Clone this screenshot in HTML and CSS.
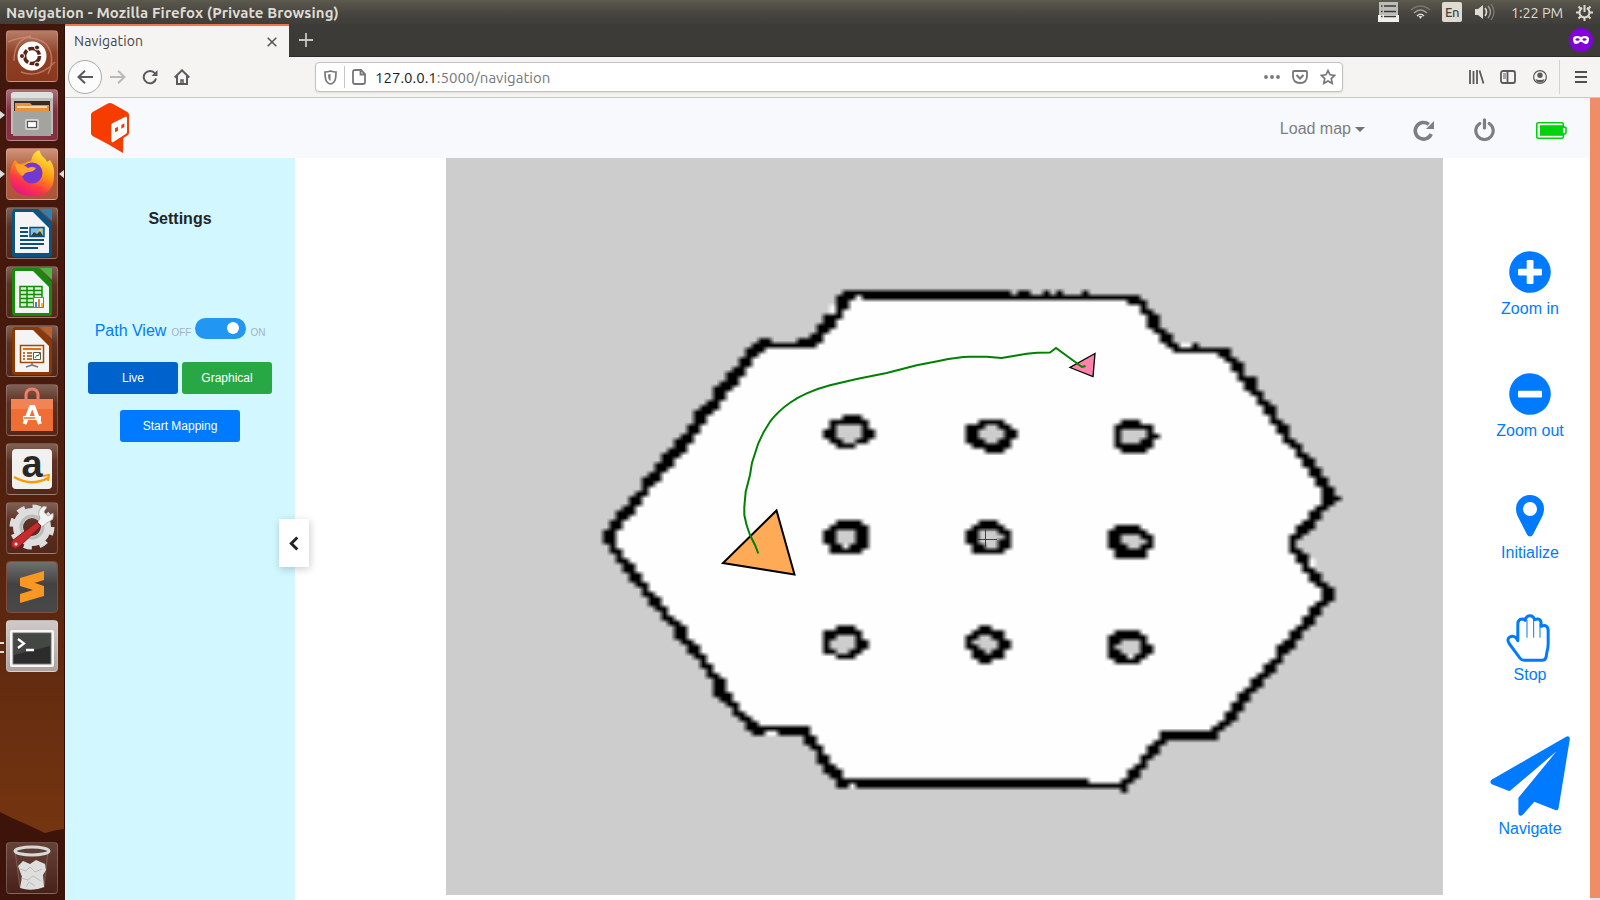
FILE: index.html
```html
<!DOCTYPE html>
<html lang="en">
<head>
<meta charset="utf-8">
<title>Navigation</title>
<link rel="stylesheet" href="styles.css">
</head>
<body>
<div class="desktop">
  <header class="panel">
    <span class="panel-title">Navigation - Mozilla Firefox (Private Browsing)</span>
    <div class="tray">
      <svg class="t-list" width="21" height="20" viewBox="0 0 21 20"><path d="M1 0h19v14H1z" fill="#bdbdb8"/><path d="M0 13h21v7H0z" fill="#efefec"/><path d="M3 4h1.500M6 4h12M3 9.500h1.500M6 9.500h12M3 14.500h1.500M6 14.500h12" stroke="#383733" stroke-width="1.300"/></svg>
      <svg class="t-wifi" width="21" height="14" viewBox="0 0 21 14" fill="none" stroke-width="1.600"><path d="M1 5Q10.500-3 20 5" stroke="#777670"/><path d="M4 8Q10.500 2 17 8" stroke="#a09e96"/><path d="M7 11Q10.500 7.500 14 11" stroke="#dfdbd2"/><path d="M8.500 11l2 3 2-3z" fill="#dfdbd2"/></svg>
      <span class="lang">En</span>
      <svg class="t-vol" width="20" height="16" viewBox="0 0 20 16" fill="none"><path d="M0 5h3l5-4v14l-5-4H0z" fill="#dfdbd2"/><path d="M10 4q3 4 0 8" stroke="#dfdbd2" stroke-width="1.600"/><path d="M13 2q5 6 0 12" stroke="#a09e96" stroke-width="1.400"/><path d="M16 0q6 8 0 16" stroke="#777670" stroke-width="1.400"/></svg>
      <span class="clock">1:22 PM</span>
      <svg width="17" height="17" viewBox="0 0 17 17" fill="none" stroke="#dfdbd2"><path d="M6.200 4a5 5 0 1 0 4.600 0" stroke-width="2"/><path d="M8.500 1v7" stroke-width="2"/><path d="M2.500 2.500l2 2M14.500 2.500l-2 2M0 8.500h3M14 8.500h3M2.500 14.500l2-2M14.500 14.500l-2-2M8.500 14v3" stroke-width="2"/></svg>
    </div>
  </header>
  <div class="work">
    <nav class="launcher">
      <svg class="dunes" width="65" height="100" viewBox="0 0 65 100"><path d="M0 12l12 6 18 8 15 7 12-3 8-1v71H0z" fill="#3e1309"/></svg>
      <div class="tile dash"><svg viewBox="0 0 52 52"><g fill="none" stroke="#d99a83" stroke-width="1.500" opacity=".6"><path d="M2 12Q24 2 40 14q10 12 2 30"/><path d="M8 31Q8 10 25 6"/><path d="M15 42q18 7 34-10"/></g><circle cx="26" cy="26" r="14.500" fill="#fff"/><circle cx="26" cy="26" r="7.500" fill="none" stroke="#572616" stroke-width="3.500" stroke-dasharray="14 1.700"/><g fill="#572616" stroke="#fff"><circle cx="16" cy="26" r="2.500"/><circle cx="31" cy="17.500" r="2.500"/><circle cx="31" cy="34.500" r="2.500"/></g></svg></div>
      <div class="tile files running"><svg viewBox="0 0 52 52"><path d="M5 5q1-2 3-2h36q2 0 3 2v40H5z" fill="#bcbcb9"/><path d="M5 5q1-2 3-2h36q2 0 3 2v4H5z" fill="#dededb"/><path d="M8 12h36v12H8z" fill="#3b2924"/><path d="M9 14h15l2 2h17v9H9z" fill="#e9913c"/><path d="M11 18h30" stroke="#fff0c8" stroke-width="1.500"/><path d="M7 22h38v25H7z" fill="#a3a3a0"/><rect x="19" y="30" width="14" height="11" rx="2" fill="#d4d4d1"/><rect x="21.500" y="32.500" width="9" height="6" fill="#fff" stroke="#555" stroke-width="1.200"/></svg></div>
      <div class="tile fox running active"><svg viewBox="0 0 52 52"><defs><linearGradient id="ff" x1=".8" y1="0" x2=".3" y2="1"><stop offset="0" stop-color="#fff44f"/><stop offset=".45" stop-color="#ff980e"/><stop offset=".75" stop-color="#ff3647"/><stop offset="1" stop-color="#e31587"/></linearGradient></defs><path d="M9 12q2 2 4 4l6-1q3-2 6-2 1-8 8-11l3 6q3 2 5 6l3-2q5 7 4 16 0 20-22 20T4 28q0-10 5-16z" fill="url(#ff)"/><circle cx="26" cy="25" r="10.500" fill="#7139cf"/><path d="M9 16q9 0 13 4 4-2 8 0-2 4-8 4-4 1-5 4-6-2-8-12z" fill="#ffa52b"/></svg></div>
      <div class="tile"><svg viewBox="0 0 52 52"><path d="M8 2h24l14 14v31q0 3-3 3H9q-3 0-3-3V5z" fill="#0a5485"/><path d="M9 5h18l16 16v25H9z" fill="#f4f4f4"/><path d="M34 2h12v12z" fill="#2c82b5"/><path d="M14 21h8M14 25h8M14 29h8M14 33h24M14 37h24M14 41h18" stroke="#0b4f7d" stroke-width="2"/><path d="M24 20.500h14v9H24z" fill="#7fc1e6" stroke="#0b4f7d" stroke-width="1.500"/><path d="M25 29l3-4 3 2 3-3 3 5z" fill="#39412a"/><circle cx="34.500" cy="23" r="1.500" fill="#ffc425"/></svg></div>
      <div class="tile"><svg viewBox="0 0 52 52"><path d="M8 2h24l14 14v31q0 3-3 3H9q-3 0-3-3V5z" fill="#168a0b"/><path d="M9 5h18l16 16v26H9z" fill="#f4f4f4"/><path d="M34 2h12v12z" fill="#4cb83f"/><path d="M14 20h22v21H14z" fill="#d8f2d2"/><path d="M14 20.500h22v20.500H14zM14 24.500h22M14 28.500h22M14 32.500h22M14 36.500h22M21 20v21M28 20v21" fill="none" stroke="#168a0b" stroke-width="1.500"/><path d="M27.500 31.500h10v10h-10z" fill="#fff" stroke="#777"/><path d="M29 36h2v5h-2z" fill="#1b8ee0"/><path d="M32 33h2v8h-2z" fill="#f07a1d"/><path d="M35 37h2v4h-2z" fill="#f5b921"/></svg></div>
      <div class="tile"><svg viewBox="0 0 52 52"><path d="M8 2h24l14 14v31q0 3-3 3H9q-3 0-3-3V5z" fill="#8d3703"/><path d="M9 5h18l16 16v26H9z" fill="#f4f4f4"/><path d="M34 2h12v12z" fill="#bb622b"/><path d="M14.500 20.500h23v17h-23z" fill="#fff8ef" stroke="#a1470b" stroke-width="1.500"/><path d="M17 24h18" stroke="#e06f22" stroke-width="2"/><path d="M17 28h2M21 28h5M17 31h2M21 31h5M17 34h2M21 34h5" stroke="#a1470b" stroke-width="1.600"/><path d="M27.500 27.500h7v7h-7z" fill="#fff" stroke="#555"/><path d="M29 33l2-3 1 1 2-3" fill="none" stroke="#168a0b"/><path d="M26 38v2l-6 2M26 40l6 2" fill="none" stroke="#777" stroke-width="1.500"/></svg></div>
      <div class="tile"><svg viewBox="0 0 52 52"><path d="M5 15h42v32H5z" fill="#ef6e34"/><path d="M5 15h42v10H5z" fill="#f18452"/><path d="M20 18V10q1-5 6-5t6 5v8" fill="none" stroke="#f0806a" stroke-width="3"/><path d="M18.500 40l6.500-17h2.500l6.500 17" fill="none" stroke="#fff" stroke-width="4"/><path d="M17 34h18" stroke="#fff" stroke-width="4"/><path d="M18 34h11" stroke="#ef6e34" stroke-width="1.500"/></svg></div>
      <div class="tile"><svg viewBox="0 0 52 52"><rect x="6" y="6" width="40" height="40" rx="4" fill="#f1f1f0"/><text x="26" y="33.500" class="amz">a</text><path d="M8 34q17 10 34 1" fill="none" stroke="#f90" stroke-width="2.500"/><path d="M37 33l6-1-1 6" fill="none" stroke="#f90" stroke-width="2"/></svg></div>
      <div class="tile"><svg viewBox="0 0 52 52"><circle cx="26" cy="25" r="14" fill="none" stroke="#dedede" stroke-width="10"/><circle cx="26" cy="25" r="20" fill="none" stroke="#dedede" stroke-width="5" stroke-dasharray="8 7.700"/><circle cx="26" cy="25" r="11" fill="none" stroke="#bbb" stroke-width="3"/><path d="M31 22l3-6q-4-8 4-12l3 1-3 5 4 4 5-3q2 7-5 9l-6 5z" fill="#f2f2f2" stroke="#999" stroke-width=".7"/><path d="M31 20l4 4-22 21q-4 3-7 0-2-3 0-6z" fill="#c72b2d" stroke="#80151a"/><circle cx="10" cy="42" r="1.500" fill="#fff"/></svg></div>
      <div class="tile sublime"><svg viewBox="0 0 52 52"><path d="M14 17l24-7v9l-13 4 13 4v8l-24 7v-9l13-4-13-4z" fill="#f89822"/><path d="M14 17l24 8v3l-24-4z" fill="#f89822"/></svg></div>
      <div class="tile term running"><svg viewBox="0 0 52 52"><rect x="4" y="10" width="44" height="37" rx="2" fill="#f6f6f6"/><rect x="7" y="13" width="38" height="31" fill="#2b2c2b" stroke="#777"/><path d="M8 14h36v12L8 35z" fill="#454745"/><path d="M12 19l6 4.500-6 4.500M20 30h8" stroke="#fff" stroke-width="2.300" fill="none"/></svg></div>
      <div class="tile trash"><svg viewBox="0 0 52 52"><path d="M9 9h33l-4 36q-12 4-24 0z" fill="#5c3a30" stroke="#8a6f66" stroke-width=".7"/><path d="M12 24l5-5 7 3 6-4 9 4 1 6-3 5 1 12q-12 5-24 1l2-11z" fill="#dededc"/><path d="M14 27l6 2 4-4 5 5 7-3M15 36l7 2 5-4 8 5M20 45l3-5 6 4" stroke="#bcbcb9" fill="none"/><ellipse cx="26" cy="9" rx="17" ry="4" fill="#5a4038" stroke="#d8d8d6" stroke-width="3"/></svg></div>
    </nav>
    <main class="browser">
      <div class="tabs">
        <div class="tab"><span>Navigation</span><svg width="10" height="10" viewBox="0 0 10 10"><path d="M.7.700l8.600 8.600M9.300.7L.7 9.300" stroke="#56565a" stroke-width="1.600"/></svg></div>
        <svg class="newtab" width="14" height="14" viewBox="0 0 14 14"><path d="M7 0v14M0 7h14" stroke="#c8c6c0" stroke-width="1.800"/></svg>
        <svg class="mask" width="24" height="24" viewBox="0 0 24 24"><circle cx="12" cy="12" r="12" fill="#8000d7"/><path d="M4 10q1-2 4-2 2 0 4 1 2-1 4-1 3 0 4 2 0 6-3 6-2 0-4-2h-2q-2 2-4 2-3 0-3-6z" fill="#fff"/><ellipse cx="8.500" cy="11.500" rx="2" ry="1.200" fill="#8000d7"/><ellipse cx="15.500" cy="11.500" rx="2" ry="1.200" fill="#8000d7"/></svg>
      </div>
      <div class="toolbar">
        <span class="back"><svg width="16" height="14" viewBox="0 0 16 14" fill="none" stroke="#5a5a5c" stroke-width="2"><path d="M8 .7L1.500 7 8 13.300M1.500 7H16"/></svg></span>
        <svg class="fwd" width="16" height="14" viewBox="0 0 16 14" fill="none" stroke="#bbb9b6" stroke-width="2"><path d="M8 .7L14.500 7 8 13.300M14.500 7H0"/></svg>
        <svg class="reload" width="16" height="16" viewBox="0 0 16 16"><path d="M13 4.500A6.200 6.200 0 1 0 14 9.500" fill="none" stroke="#5a5a5c" stroke-width="2"/><path d="M15.500 1v6h-6z" fill="#5a5a5c"/></svg>
        <svg class="home" width="16" height="16" viewBox="0 0 16 16" fill="none" stroke="#5a5a5c" stroke-width="2"><path d="M.7 8.500L8 1.300l7.300 7.200M3 7v8h10V7"/><path d="M7 15v-4h2v4" stroke-width="1.500"/></svg>
        <div class="url">
          <svg width="13" height="15" viewBox="0 0 13 15"><path d="M6.500 1q2.500 1 5.500 1 0 8-2 10-2 2-3.500 2T3 12Q1 10 1 2q3 0 5.500-1z" fill="none" stroke="#77777a" stroke-width="1.700"/><path d="M6.500 4v7Q4 10 4 4.500z" fill="#77777a"/></svg>
          <i class="sep"></i>
          <svg width="14" height="16" viewBox="0 0 14 16" fill="none" stroke="#77777a" stroke-width="1.800"><path d="M3 1h6l4 4v8q0 2-2 2H3q-2 0-2-2V3q0-2 2-2zM8.500 1.500v4H13"/></svg>
          <span class="addr">127.0.0.1<em>:5000/navigation</em></span>
          <svg class="dots" width="16" height="4" viewBox="0 0 16 4" fill="#77777a"><circle cx="2" cy="2" r="1.900"/><circle cx="8" cy="2" r="1.900"/><circle cx="14" cy="2" r="1.900"/></svg>
          <svg class="pocket" width="16" height="14" viewBox="0 0 16 14" fill="none" stroke="#77777a" stroke-width="1.800"><path d="M1 2q0-1 1-1h12q1 0 1 1v4q0 7-7 7T1 6z"/><path d="M4.500 5L8 8.500 11.500 5" stroke-width="2"/></svg>
          <svg class="star" width="16" height="16" viewBox="0 0 16 16" fill="none" stroke="#77777a" stroke-width="1.700"><path d="M8 1.500l2 4.300 4.700.6-3.400 3.200.9 4.700L8 12l-4.200 2.300.9-4.700L1.300 6.400 6 5.800z"/></svg>
        </div>
        <svg class="lib" width="16" height="14" viewBox="0 0 16 14" stroke="#5a5a5c" stroke-width="1.800"><path d="M1 0v14M4.500 1v13M8 0v14M10.500.5l4 13"/></svg>
        <svg class="side" width="16" height="14" viewBox="0 0 16 14" fill="none" stroke="#5a5a5c" stroke-width="1.800"><rect x="1" y="1" width="14" height="12" rx="2"/><path d="M7.500 1v12"/><path d="M3 4h3M3 6h3M3 8h3" stroke-width="1"/></svg>
        <svg class="user" width="14" height="14" viewBox="0 0 14 14"><circle cx="7" cy="7" r="6.400" fill="none" stroke="#5a5a5c" stroke-width="1.200"/><circle cx="7" cy="5.300" r="2.700" fill="#5a5a5c"/><path d="M2.500 9q1.500 1 4.500 1t4.500-1q-1 3.500-4.500 3.500T2.500 9z" fill="#5a5a5c"/></svg>
        <i class="tbsep"></i>
        <svg width="12" height="12" viewBox="0 0 12 12" stroke="#4f4f51" stroke-width="1.800"><path d="M0 1h12M0 6h12M0 11h12"/></svg>
      </div>
      <div class="page">
        <div class="site">
          <div class="navbar">
            <svg class="logo" width="38" height="50" viewBox="0 0 114 150"><path d="M57 0q4 0 8 2l44 25q5 3 5 8v54q0 5-4 8l-13 8 -1 45q-46-28-90-50-6-3-6-9V35q0-5 5-8L49 2q4-2 8-2z" fill="#f73c00"/><path d="M64 61l38-19q6-3 6 3v42q0 4-4 6L67 117q-6 3-6-3V67q0-4 3-6z" fill="#fff"/><path d="M72 76l9-5v12l-9 5zM91 66l9-5v11l-9 5z" fill="#f73c00"/></svg>
            <div class="nav-right">
              <span class="load">Load map<i class="caret"></i></span>
              <svg class="refresh" width="21" height="21" viewBox="0 0 21 21"><path d="M18.200 14A8.300 8.300 0 1 1 15.800 4.300" fill="none" stroke="#7c7e80" stroke-width="3.600"/><path d="M21 1v8h-8z" fill="#7c7e80"/></svg>
              <svg class="power" width="21" height="23" viewBox="0 0 21 23" fill="none" stroke="#7c7e80" stroke-width="3.200" stroke-linecap="round"><path d="M5.800 5.500a8.700 8.700 0 1 0 9.400 0M10.500 1.800V10"/></svg>
              <svg width="31" height="17" viewBox="0 0 31 17"><path d="M2 .8h24q1.300 0 1.300 1.300v3h1.400q1.300 0 1.300 1.300v4.200q0 1.300-1.300 1.300h-1.400v3q0 1.300-1.300 1.300H2q-1.200 0-1.200-1.300V2.100Q.8.800 2 .8z" fill="#fff" stroke="#00d20c" stroke-width="1.600"/><path d="M4 3.200h23v10.600H4z" fill="#00d20c"/></svg>
            </div>
          </div>
          <div class="content">
            <aside class="sidebar">
              <h1>Settings</h1>
              <div class="pathview"><span>Path View</span><small>OFF</small><i class="switch"></i><small>ON</small></div>
              <div class="row"><button class="live">Live</button><button class="graph">Graphical</button></div>
              <button class="start">Start Mapping</button>
              <button class="collapse" aria-label="Collapse"><svg width="10" height="15" viewBox="0 0 10 15"><path d="M8.300 1.500L2.300 7.500l6 6" fill="none" stroke="#212529" stroke-width="3"/></svg></button>
            </aside>
            <section class="map">
              <canvas id="map" width="997" height="737"></canvas>
              <svg class="overlay" width="997" height="737" viewBox="446 158 997 737">
                <path d="M978 539.500h19M985.500 530v17" stroke="#222" stroke-width=".8"/>
                <path d="M776.500 510.500L723 563l71.500 11.500z" fill="#ffaa56" stroke="#000" stroke-width="2"/>
                <path d="M1095 353.500l-25 14 23 9z" fill="#ff82ac" stroke="#000" stroke-width="1.300"/>
                <path d="M758.300 553.500L755 545 750 535Q746 525 744.300 515V507L745.700 491.700 750 475 752 462.700 758.300 443.300Q763 432 770 421.700 778 411 790 402.700 798 397 806.700 393.300 818 388.500 830 385.300L856.700 379 886.700 373 916.700 365.300 940 360.700Q957 357 970 356.700H986.700L1001.700 358 1026.700 353.700Q1036 352.500 1050 352.500L1056 348 1082 367 1085.500 366" fill="none" stroke="#008000" stroke-width="2"/>
              </svg>
            </section>
            <div class="actions">
              <div class="act"><svg width="42" height="42" viewBox="0 0 42 42"><circle cx="21" cy="21" r="20.800" fill="#007bff"/><rect x="9" y="17.700" width="24" height="6.800" rx="1.300" fill="#fff"/><rect x="17.700" y="9" width="6.800" height="24" rx="1.300" fill="#fff"/></svg><span>Zoom in</span></div>
              <div class="act"><svg width="42" height="42" viewBox="0 0 42 42"><circle cx="21" cy="21" r="20.800" fill="#007bff"/><rect x="9" y="17.700" width="24" height="6.800" rx="1.300" fill="#fff"/></svg><span>Zoom out</span></div>
              <div class="act"><svg width="28" height="42" viewBox="0 0 28 42"><path fill-rule="evenodd" d="M14 0a14 14 0 0 1 14 14q0 3.500-1.300 6.500L17 39.500q-1 2-3 2t-3-2L1.300 20.500Q0 17.500 0 14A14 14 0 0 1 14 0zm0 7a7 7 0 1 0 0 14 7 7 0 0 0 0-14z" fill="#007bff"/></svg><span>Initialize</span></div>
              <div class="act up"><svg class="hand" width="44" height="48" viewBox="0 0 131 144" fill="none" stroke="#007bff"><path d="M35 80V31q0-15 13-16 6 0 9 4 3-14 14-14t14 12q20-8 20 13v7q21-8 21 14v38q0 12-4 27l-2 12q-2 11-12 11H54q-8 0-13-7L10 90Q0 76 11 69q10-6 19 3z" stroke-width="9" stroke-linejoin="round"/><path d="M62.500 18v53M82.500 18v53M101.500 28v43" stroke-width="3"/></svg><span>Stop</span></div>
              <div class="act up nav"><svg width="80" height="80" viewBox="0 0 240 241"><path d="M229 2q6-3 10 2 1 2 1 5l-34 209q-2 8-10 5l-63-25-33 38q-4 5-10 4-5-2-5-8v-46L200 46 60 165q-2 2-5 0L5 145q-8-6-1-13z" fill="#007bff"/></svg><span>Navigate</span></div>
            </div>
          </div>
        </div>
        <div class="strip"></div>
      </div>
    </main>
  </div>
</div>
<script src="map.js"></script>
</body>
</html>
```

FILE: styles.css
```css
* { box-sizing: border-box; }
body { margin: 0; background: #fff; overflow: hidden; font-family: "Liberation Sans", Arial, sans-serif; }
svg { display: block; flex: none; }
.desktop { width: 1600px; height: 900px; display: flex; flex-direction: column; }
.panel { height: 24px; flex: none; display: flex; align-items: center; justify-content: space-between; padding: 0 7px 0 6px; background: linear-gradient(#5c594d, #45443f 60%, #3f3e3a); color: #dfdbd2; font-family: Ubuntu, "Noto Sans", sans-serif; }
.panel-title { font-size: 15px; font-weight: 700; letter-spacing: 0.12px; white-space: nowrap; }
.tray { display: flex; align-items: center; }
.t-list { margin-right: 11px; }
.t-wifi { margin-right: 11px; }
.lang { width: 20px; height: 20px; border-radius: 2px; background: #dfdbd2; color: #45443f; font-size: 13px; line-height: 20px; text-align: center; margin-right: 13px; letter-spacing: -0.5px; font-weight: 500; }
.t-vol { margin-right: 16px; }
.clock { width: 52px; font-size: 14.500px; margin-right: 13px; white-space: nowrap; letter-spacing: -0.1px; }
.work { flex: 1; display: flex; min-height: 0; }
.launcher { position: relative; width: 65px; flex: none; display: flex; flex-direction: column; align-items: flex-start; gap: 7px; padding: 6px 0 6px 6px; background: linear-gradient(#42170b, #46190d 35%, #5a260f 65%, #743510 92%, #743510); border-right: 1px solid #2b0e07; }
.dunes { position: absolute; left: 0; bottom: 0; }
.tile { position: relative; width: 52px; height: 52px; flex: none; border-radius: 4px; background: linear-gradient(#806155, #5c3225 35%, #532719); border: 1px solid rgba(255,255,255,.2); }
.tile svg { width: 52px; height: 52px; margin: -1px; }
.dash { background: linear-gradient(#b87d68, #8e4127 45%, #8a381e); }
.files { background: linear-gradient(#a87079, #83303f 40%, #852f40); }
.fox { background: linear-gradient(#cf957c, #b05c3e 40%, #ae5539); }
.sublime { background: linear-gradient(#707070, #424242 45%, #494949); border-color: #824b3a; }
.term { background: linear-gradient(#cfcac8, #aba3a2); }
.trash { margin-top: auto; background: linear-gradient(#664138, #48221a); }
.running::before, .active::after { content: ""; position: absolute; top: 21px; border: 4px solid transparent; }
.running::before { left: -7px; border-left: 5px solid #ddd; border-right: 0; }
.active::after { right: -7px; border-right: 5px solid #ddd; border-left: 0; }
.term.running::before { border: 0; width: 4px; height: 7px; border-top: 2px solid #ddd; border-bottom: 2px solid #ddd; }
.amz { font: 700 38px "Liberation Sans", sans-serif; text-anchor: middle; fill: #272727; }
.browser { flex: 1; min-width: 0; display: flex; flex-direction: column; }
.tabs { height: 33px; flex: none; display: flex; align-items: center; background: #3c3b37; border-bottom: 1px solid #2b2a27; padding-right: 7px; }
.tab { width: 224px; height: 33px; margin-bottom: -1px; border-top: 2px solid #f0764c; background: #f5f4f2; display: flex; align-items: center; justify-content: space-between; padding: 0 12px 0 9px; font: 14px Ubuntu, "Noto Sans", sans-serif; color: #45454a; letter-spacing: .15px; }
.tab span { margin-top: -2px; }
.newtab { margin-left: 10px; }
.mask { margin-left: auto; }
.toolbar { height: 41px; flex: none; display: flex; align-items: center; background: #f5f4f2; border-bottom: 1px solid #c9c7c5; padding: 0 13px 0 3px; }
.back { width: 34px; height: 34px; border: 1px solid #aaa; border-radius: 50%; background: #fcfcfc; display: flex; align-items: center; justify-content: center; margin-right: 8px; }
.fwd { margin-right: 16px; }
.reload { margin-right: 16px; }
.home { margin-right: 125px; }
.url { width: 1028px; height: 30px; border: 1px solid #c4c2bf; border-radius: 4px; background: #fff; box-shadow: 0 1px 2px rgba(0,0,0,.1); display: flex; align-items: center; padding: 0 6px 0 8px; }
.sep { width: 1px; height: 22px; background: #c6c6c6; margin: 0 7px; }
.addr { margin-left: 9px; font: 15px Ubuntu, "Noto Sans", sans-serif; color: #1c1c1e; }
.addr em { font-style: normal; color: #77777a; }
.dots { margin-left: auto; margin-right: 12px; }
.pocket { margin-right: 12px; }
.lib { margin-left: 126px; margin-right: 15px; }
.side { margin-right: 17px; }
.user { margin-right: 12px; }
.tbsep { width: 1px; height: 34px; background: #d5d3d1; margin-right: 15px; }
.page { flex: 1; display: flex; min-height: 0; background: #e5e5ea; }
.site { width: 1525px; flex: none; display: flex; flex-direction: column; }
.strip { width: 10px; height: 800px; background: #ee8d66; }
.navbar { height: 60px; flex: none; background: #f8f9fc; display: flex; justify-content: space-between; align-items: center; padding: 0 23px 0 26px; }
.nav-right { display: flex; align-items: center; }
.load { font-size: 16px; color: #7c7e80; display: flex; align-items: center; gap: 4px; margin-right: 48px; padding-top: 2px; }
.caret { border: 5px solid transparent; border-top-color: #6f7173; border-bottom: 0; }
.refresh { margin: 5px 40px 0 0; }
.power { margin: 2px 41px 0 0; }
.nav-right svg:last-child { margin-top: 5px; }
.content { flex: 1; display: flex; min-height: 0; background: #fff; }
.sidebar { position: relative; width: 230px; flex: none; background: #d2f7fe; display: flex; flex-direction: column; align-items: center; padding-top: 49px; }
.sidebar h1 { margin: 0 0 86px; font-size: 16px; line-height: 24px; color: #212529; }
.pathview { height: 28px; display: flex; align-items: center; font-size: 16px; color: #007bff; margin-bottom: 17px; white-space: nowrap; }
.pathview span { margin-right: 5px; }
.pathview small { font-size: 10px; color: #a3b1cc; padding-top: 3px; }
.switch { width: 51px; height: 21px; border-radius: 11px; background: #2196f3; margin: -6px 4px 0 4px; display: flex; justify-content: flex-end; align-items: center; padding-right: 7px; }
.switch::before { content: ""; width: 12px; height: 12px; border-radius: 50%; background: #fff; }
button { border: 0; padding: 0; font: 12px "Liberation Sans", sans-serif; color: #fff; border-radius: 3px; height: 32px; }
.row { display: flex; gap: 4px; margin-bottom: 16px; }
.live { width: 90px; background: #0062cc; }
.graph { width: 90px; background: #28a745; }
.start { width: 120px; background: #007bff; }
.collapse { position: absolute; z-index: 2; right: -14px; top: 361px; width: 30px; height: 48px; background: #fff; border-radius: 0; box-shadow: 1px 2px 8px rgba(0,0,0,.2); display: flex; align-items: center; justify-content: center; }
.map { position: relative; width: 997px; height: 737px; flex: none; margin-left: 151px; background: #cdcdcd; }
.map canvas { display: block; }
.overlay { position: absolute; left: 0; top: 0; }
.actions { width: 120px; margin-left: 27px; padding-top: 93px; display: flex; flex-direction: column; gap: 52px; color: #007bff; font-size: 16px; line-height: 24px; }
.act { display: flex; flex-direction: column; align-items: center; gap: 4px; }
.up { margin-top: -3px; gap: 1px; }
.hand { margin-left: -4px; }
```

FILE: map.js
```javascript
// Occupancy grid: wall cells per row as inclusive column ranges.
const walls = `28:61-86,88-89,92,94,98
29:60-62,64-106
30:60-61,105-107
31:60-61,107
32:60,107-108
33:58-60,108-109
34:58-59,108-109
35:57-59,108-109
36:57-58,109-110
37:56-57,110-111
38:48-49,54-57,110-111
39:47-56,111-112,115
40:46-48,112-120
41:46-47,119-120
42:45-46,120-121
43:45-46,121-122
44:44-45,121-122
45:43-45,122
46:43-44,122-124
47:42-44,123-124
48:41-43,123-124
49:41-42,124-125
50:41-42,125
51:40-41,125-126
52:39-41,126-127
53:38-40,126-127
54:38-39,127
55:38-39,127-128
56:37-38,128-129
57:37-38,128-129
58:36-37,129
59:35-37,129-130
60:35-36,130-131
61:34-36,131
62:33-35,131-132
63:33-34,132-133
64:32-34,132-133
65:32-33,133-134
66:31-32,133-134
67:30-32,134-135
68:30-31,134-135
69:30,135-136
70:29-30,135-136
71:28-29,135-137
72:28-29,135-136
73:27-28,134-135
74:26-28,133-134
75:26-27,133-134
76:25-26,132-133
77:25-26,131-133
78:24-25,131-132
79:24-25,130-131
80:24-25,130
81:25,130
82:25-26,130-131
83:26,131-132
84:26-27,131-132
85:27-28,132
86:27-28,132-133
87:28-29,133-134
88:28-29,133-134
89:29-30,134-135
90:30,135-136
91:30-31,135-136
92:31-32,135-136
93:31-32,134-135
94:32-33,133-134
95:33,133-134
96:33-34,132-133
97:34-35,132-133
98:35-36,131-132
99:35-36,130-131
100:35-36,130-131
101:36-37,129-130
102:37-38,128-130
103:37-38,128-129
104:38-39,128
105:39,127-128
106:39-40,126-127
107:40,126-127
108:40-41,125-126
109:41-42,124-125
110:41-42,124-125
111:41-42,123-124
112:41-43,122-123
113:42-43,122-123
114:43-44,121-122
115:44,121-122
116:44-45,120-121
117:45-46,120-121
118:46-47,119-120
119:46-55,118-119
120:47-48,51-55,110-118
121:55-56,110-118
122:55-56,109-110
123:56-57,108-109
124:57,108-109
125:57-58,107-108
126:57-58,107
127:58-59,106-107
128:58-60,105-106
129:59-60,105-106
130:60-98,104-105
131:60-61,63-104
132:104`;

const pillars = [
  [58, 54, ["...###..", ".######.", ".#oooo#.", "##oooo##", "##oooo##", ".##oo##.", "..###..."]],
  [80, 55, ["..####..", "###oo##.", "##oooo##", "##oooo##", "###oo##.", ".######.", "...###.."]],
  [103, 55, [".###...", "######.", "#oooo#.", "#oooo##", "#ooo##.", "######.", ".####.."]],
  [58, 76, ["..####.", ".######", "##ooo##", "##ooo##", "##ooo##", ".##.###", ".#####."]],
  [80, 76, ["..###..", ".#####.", "##ooo##", "##oooo#", "##ooo##", ".##oo##", ".#####."]],
  [102, 77, [".####..", "######.", "##ooo##", "##oooo#", "###oo##", ".#####.", ".#####."]],
  [58, 98, ["..###..", "######.", "##ooo#.", "#oooo##", "#oooo##", "##oo##.", "..###.."]],
  [80, 98, ["..##...", ".#####.", "##oo##.", "#oooo##", "##ooo##", ".##o##.", ".#####.", "..##..."]],
  [102, 99, [".####..", "######.", "##ooo#.", "#oooo##", "##ooo##", "###.##.", ".####.."]]
];
const freeCells = [[59, 31], [59, 32], [113, 39], [114, 39], [133, 84], [133, 85], [49, 120], [50, 120], [62, 131]];

const grid = document.createElement("canvas");
grid.width = grid.height = 160;
const g = grid.getContext("2d");
const cell = (color, x, y, w = 1) => { g.fillStyle = color; g.fillRect(x, y, w, 1); };
const WALL = "#000", FREE = "#fefefe", UNKNOWN = "#cdcdcd";
g.fillStyle = UNKNOWN;
g.fillRect(0, 0, 160, 160);

walls.split("\n").forEach(line => {
  const [row, list] = line.split(":");
  const y = +row;
  const runs = list.split(",").map(r => { const p = r.split("-").map(Number); return [p[0], p[p.length - 1]]; });
  const first = runs[0][0], last = runs[runs.length - 1][1];
  if (y > 28) cell(FREE, first, y, last - first + 1);
  if (y === 38) cell(UNKNOWN, 50, y, 4);
  runs.forEach(([a, b]) => cell(WALL, a, y, b - a + 1));
});
freeCells.forEach(([x, y]) => cell(FREE, x, y));
pillars.forEach(([x, y, rows]) => rows.forEach((s, j) => [...s].forEach((ch, i) => {
  if (ch !== ".") cell(ch === "#" ? WALL : UNKNOWN, x + i, y + j);
})));

const ctx = document.getElementById("map").getContext("2d");
ctx.fillStyle = UNKNOWN;
ctx.fillRect(0, 0, 997, 737);
ctx.imageSmoothingEnabled = true;
ctx.drawImage(grid, 1.5, -1.7, 160 * 6.474, 160 * 4.786);
```
